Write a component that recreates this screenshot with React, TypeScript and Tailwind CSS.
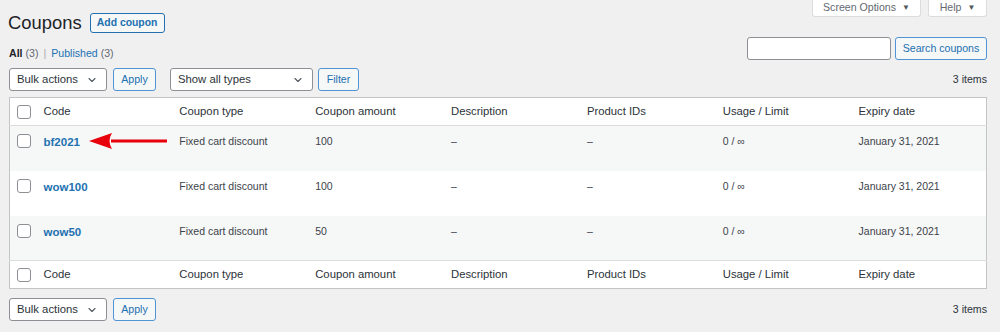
import { ChevronDown } from "lucide-react";

const font = { fontFamily: '"Liberation Sans", Arial, sans-serif' };

const columns = [
  "Code",
  "Coupon type",
  "Coupon amount",
  "Description",
  "Product IDs",
  "Usage / Limit",
  "Expiry date",
];

const coupons = [
  { code: "bf2021", type: "Fixed cart discount", amount: "100", expiry: "January 31, 2021" },
  { code: "wow100", type: "Fixed cart discount", amount: "100", expiry: "January 31, 2021" },
  { code: "wow50", type: "Fixed cart discount", amount: "50", expiry: "January 31, 2021" },
];

function Checkbox() {
  return <span className="block w-[14px] h-[14px] rounded-[3px] border border-[#8c8f94] bg-white" />;
}

function Select({ label, width }: { label: string; width: string }) {
  return (
    <div
      className={`${width} h-[23px] flex items-center justify-between pl-[7px] pr-[8px] bg-white border border-[#8c8f94] rounded-[3px] text-[11.3px] text-[#2c3338]`}
    >
      <span>{label}</span>
      <ChevronDown size={12} strokeWidth={2.2} className="text-[#50575e]" />
    </div>
  );
}

function Button({ label, className = "" }: { label: string; className?: string }) {
  return (
    <button
      className={`h-[23px] px-[6px] whitespace-nowrap bg-[#f6f7f7] border border-[#4f94d4] rounded-[3px] text-[10.6px] text-[#2271b1] ${className}`}
    >
      {label}
    </button>
  );
}

function Arrow() {
  return (
    <svg width="79" height="18" viewBox="0 0 79 18" className="absolute left-[53px] top-[6px]">
      <path d="M22 7.5 H78 V10.5 H22 Z" fill="#e8000b" />
      <path d="M0 9 L23 1 Q18 9 23 17 Z" fill="#e8000b" />
    </svg>
  );
}

function HeaderRow({ top }: { top?: boolean }) {
  return (
    <tr className={top ? "border-b border-[#dcdcde]" : "border-t border-[#dcdcde]"}>
      <td className="h-[28px] pl-[7px] align-middle">
        <Checkbox />
      </td>
      {columns.map((c) => (
        <td key={c} className="pl-[8px] text-[11.3px] text-[#2c3338] align-middle">
          {c}
        </td>
      ))}
    </tr>
  );
}

const cell = "pl-[8px] pt-[7px] align-top text-[10.5px] leading-[16px] text-[#3c434a]";

export default function App() {
  return (
    <div className="w-[1000px] h-[332px] bg-[#f0f0f1] overflow-hidden relative" style={font}>
      {/* screen meta tabs */}
      <div className="absolute right-[13px] top-0 flex gap-[7px]">
        <div className="w-[109px] h-[17px] bg-white border border-t-0 border-[#dcdcde] rounded-b-[3px] flex items-center justify-center gap-[6px] text-[10.6px] text-[#646970] pb-[1px]">
          Screen Options <span className="text-[8px] text-[#50575e]">▼</span>
        </div>
        <div className="w-[59px] h-[17px] bg-white border border-t-0 border-[#dcdcde] rounded-b-[3px] flex items-center justify-center gap-[6px] text-[10.6px] text-[#646970] pb-[1px]">
          Help <span className="text-[8px] text-[#50575e]">▼</span>
        </div>
      </div>

      <div className="px-[9px] pr-[13px]">
        {/* title */}
        <div className="flex items-center pt-[12px] h-[33px]">
          <h1 className="text-[18.4px] leading-[20px] text-[#1d2327] -ml-[1px]">Coupons</h1>
          <span className="ml-[8px] h-[20px] w-[75px] flex items-center justify-center border border-[#2271b1] rounded-[3px] bg-[#f6f7f7] text-[10.4px] font-bold text-[#2271b1]">
            Add coupon
          </span>
        </div>

        {/* subsubsub + search */}
        <div className="flex justify-between h-[34px]">
          <div className="pt-[13px] text-[10.6px] text-[#646970]">
            <span className="font-bold text-[#1d2327]">All</span> (3)
            <span className="mx-[5px] text-[#a7aaad]">|</span>
            <span className="text-[#2271b1]">Published</span> (3)
          </div>
          <div className="flex gap-[4px] pt-[4px]">
            <div className="w-[144px] h-[23px] bg-white border border-[#8c8f94] rounded-[3px]" />
            <Button label="Search coupons" className="w-[92px]" />
          </div>
        </div>

        {/* top tablenav */}
        <div className="flex items-center h-[23px] mt-[1px]">
          <Select label="Bulk actions" width="w-[98px]" />
          <Button label="Apply" className="ml-[6px] w-[43px]" />
          <Select label="Show all types" width="w-[143px] ml-[14px]" />
          <Button label="Filter" className="ml-[5px] w-[41px]" />
          <span className="ml-auto text-[10.6px] text-[#2c3338]">3 items</span>
        </div>

        {/* table */}
        <table className="mt-[6px] w-[978px] table-fixed border-collapse border border-[#c3c4c7] bg-white">
          <colgroup>
            <col className="w-[26px]" />
            {columns.map((c) => (
              <col key={c} />
            ))}
          </colgroup>
          <thead>
            <HeaderRow top />
          </thead>
          <tbody>
            {coupons.map((c, i) => (
              <tr key={c.code} className={i % 2 === 0 ? "bg-[#f6f7f7]" : "bg-white"}>
                <td className="h-[45px] pl-[7px] pt-[8px] align-top">
                  <Checkbox />
                </td>
                <td className="pl-[8px] pt-[7px] align-top leading-[16px] relative">
                  <span className="text-[11.5px] font-bold text-[#2271b1]">{c.code}</span>
                  {i === 0 && <Arrow />}
                </td>
                <td className={cell}>{c.type}</td>
                <td className={cell}>{c.amount}</td>
                <td className={cell}>–</td>
                <td className={cell}>–</td>
                <td className={cell}>0 / ∞</td>
                <td className={cell}>{c.expiry}</td>
              </tr>
            ))}
          </tbody>
          <tfoot>
            <HeaderRow />
          </tfoot>
        </table>

        {/* bottom tablenav */}
        <div className="flex items-center h-[23px] mt-[9px]">
          <Select label="Bulk actions" width="w-[98px]" />
          <Button label="Apply" className="ml-[6px] w-[43px]" />
          <span className="ml-auto text-[10.6px] text-[#2c3338]">3 items</span>
        </div>
      </div>
    </div>
  );
}
